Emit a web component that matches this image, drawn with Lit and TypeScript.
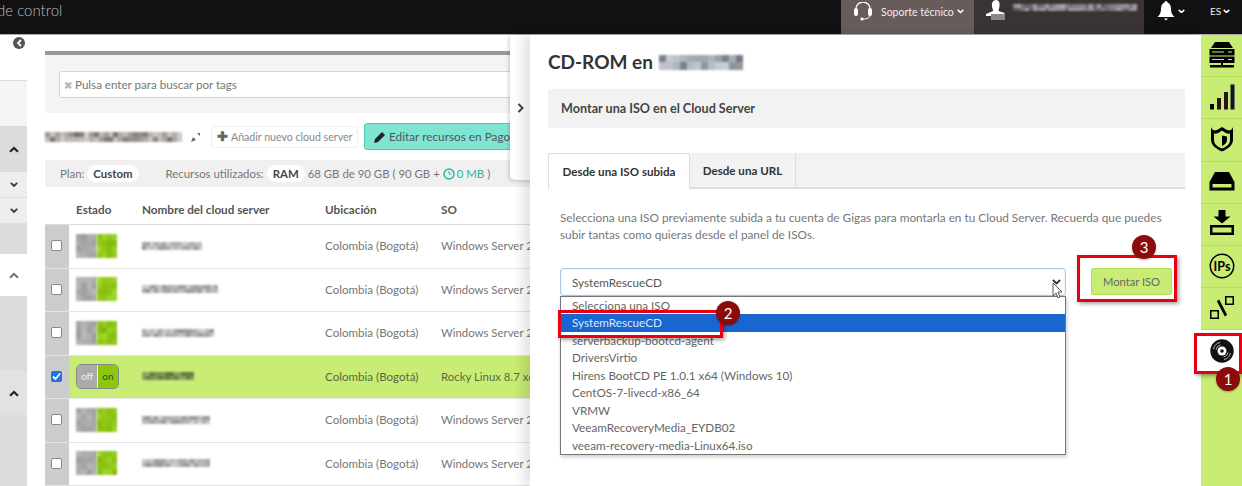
import { LitElement, html, css, svg, unsafeCSS } from "lit";
import { customElement } from "lit/decorators.js";

const F = 'Lato, "Open Sans", sans-serif';

function rnd(seed: number) {
  let s = seed;
  return () => ((s = (s * 9301 + 49297) % 233280) / 233280);
}
function mosaic(seed: number, w: number, h: number, base: number[], spread = 60, cell = 5) {
  const r = rnd(seed);
  const cols = Math.ceil(w / cell);
  const rws = Math.max(1, Math.round(h / cell));
  const cells = [];
  for (let i = 0; i < cols * rws; i++) {
    const d = (r() - 0.35) * spread;
    const c = `rgb(${(base[0] + d) | 0},${(base[1] + d) | 0},${(base[2] + d) | 0})`;
    cells.push(html`<i style="background:${c}"></i>`);
  }
  return html`<span class="mosaic" style="width:${w}px;height:${h}px;grid-template-columns:repeat(${cols},1fr);grid-template-rows:repeat(${rws},1fr)">${cells}</span>`;
}

const chev = (c = "#333", s = 8) => html`<svg width=${s} height=${s * 0.7} viewBox="0 0 10 7"><path d="M1 1.2 5 5 9 1.2" fill="none" stroke=${c} stroke-width="2.2"/></svg>`;
const chevUp = (c = "#333") => html`<svg width="10" height="7" viewBox="0 0 10 7"><path d="M1 5.8 5 2 9 5.8" fill="none" stroke=${c} stroke-width="2.2"/></svg>`;

const G = "#c9ec74";
const icons = [
  svg`<path d="M6 0h14l4 6H2z"/><rect x="0.500" y="7" width="25" height="6.500"/><rect x="0.500" y="14.500" width="25" height="6.500"/><path d="M12 21h2v2h11v2.500H1V23h11z"/><g fill=${G}><rect x="3" y="9.500" width="12" height="1"/><rect x="3" y="17" width="12" height="1"/><rect x="19" y="9.500" width="4" height="1"/><rect x="19" y="17" width="4" height="1"/></g>`,
  svg`<rect x="1" y="20" width="4" height="5.500"/><rect x="8" y="14" width="4" height="11.500" fill="#2a1216"/><rect x="15" y="8" width="4" height="17.500" fill="#2a1216"/><rect x="21.500" y="0.500" width="4" height="25" fill="#12122a"/>`,
  svg`<path d="M2 1c1 3 3 4 6 3l5-3 5 3c3 1 5 0 6-3v13c0 5-5 9-11 11.500C7 23 2 19 2 14z"/><path d="M5 7.500c2 .5 4 0 8-3 4 3 6 3.500 8 3V14c0 4-3 6.500-8 8.500-5-2-8-4.500-8-8.500z" fill=${G}/><path d="M13 9.500l5 1V14c0 2.500-2 4.500-5 6z"/>`,
  svg`<path d="M6 4h14l5.500 10v8.500H.5V14z"/><rect x="3.500" y="16" width="19" height="3.500" fill=${G}/>`,
  svg`<path d="M9.500 0h7v6.500h5l-8.500 7-8.500-7h5z"/><path d="M1 15h24v10H1z"/><rect x="3.500" y="17.500" width="19" height="5" fill=${G}/>`,
  svg`<circle cx="13" cy="13" r="11.700" fill="none" stroke="#000" stroke-width="1.500"/><text x="13" y="17.500" font-size="12.500" font-weight="700" text-anchor="middle" font-family="Lato, sans-serif">IPs</text>`,
  svg`<path d="M1 15h9v9H1zM2.500 16.500v6h6v-6zM16 1h9v9h-9zM17.500 2.500v6h6v-6z" fill-rule="evenodd"/><path d="M7 7l2-2 10 14-2 2z" transform="rotate(8 13 13)"/>`,
];

const rows = [
  { seed: 3, w: 60, so: "Windows Server 2" },
  { seed: 17, w: 76, so: "Windows Server 2" },
  { seed: 29, w: 72, so: "Windows Server 2" },
  { seed: 41, w: 52, so: "Rocky Linux 8.7 x64", active: true },
  { seed: 53, w: 68, so: "Windows Server 2" },
  { seed: 67, w: 68, so: "Windows Server 2" },
];

const isoList = [
  "Selecciona una ISO",
  "SystemRescueCD",
  "serverbackup-bootcd-agent",
  "DriversVirtio",
  "Hirens BootCD PE 1.0.1 x64 (Windows 10)",
  "CentOS-7-livecd-x86_64",
  "VRMW",
  "VeeamRecoveryMedia_EYDB02",
  "veeam-recovery-media-Linux64.iso",
];

const sideSegs = [
  ["s-white", 46, ""], ["s-pale", 46, ""], ["s-gray", 45, "up"], ["s-pale2", 26, "down"], ["s-pale2", 26, "down"],
  ["s-gray", 30, ""], ["s-white", 43, "upg"], ["s-gray", 30, ""], ["s-gray", 44, ""], ["s-gray2", 45, "up2"], ["s-gray", 30, ""], ["s-gray", 40, ""],
] as const;

@customElement("app-root")
export class AppRoot extends LitElement {
  static styles = css`
    :host { display: block; width: 1242px; height: 486px; overflow: hidden; position: relative; font-family: ${unsafeCSS(F)}; color: #666; font-size: 12px; background: #fff; }
    .mosaic { display: inline-grid; overflow: hidden; filter: blur(.8px); vertical-align: middle; flex: none; }
    header { height: 34px; background: #111; border-bottom: 1px solid #aaa; display: flex; align-items: stretch; color: #ddd; box-sizing: content-box; }
    .brand { font-size: 15px; color: #bbb; margin-left: -3px; line-height: 20px; width: 844px; flex: none; font-weight: 300; }
    .support { width: 133px; flex: none; background: #665c59; display: flex; align-items: center; gap: 3px; padding: 0 0 11px 12px; box-sizing: border-box; color: #eee; font-size: 10.5px; height: 34px; white-space: nowrap; }
    .support svg:first-child { margin-right: 5px; }
    .user { width: 170px; flex: none; background: #3a3333; display: flex; align-items: flex-start; gap: 6px; padding: 0 0 0 11px; box-sizing: border-box; }
    .user .mosaic { margin-top: 4px; }
    .bell { width: 55px; flex: none; display: flex; gap: 3px; padding: 0 0 12px 13px; box-sizing: border-box; align-items: center; }
    .lang { display: flex; align-items: center; gap: 2px; padding: 0 0 12px 11px; font-size: 10px; color: #eee; }
    .body { display: flex; height: 451px; }
    .left { width: 27px; flex: none; display: flex; flex-direction: column; position: relative; }
    .seg { display: flex; align-items: center; justify-content: center; flex: none; border-bottom: 1px solid #ddd; box-sizing: border-box; }
    .s-white { background: #fff; } .s-pale { background: #f5f5f5; } .s-gray { background: #dcdcdc; } .s-pale2 { background: #eee; } .s-gray2 { background: #e2e2e2; }
    .collapse { position: absolute; left: 13px; top: 2px; width: 12px; height: 12px; border-radius: 50%; background: #555; display: flex; align-items: center; justify-content: center; }
    main { flex: 1; min-width: 0; padding: 16px 0 0 18px; overflow: hidden; }
    .topbar { height: 4px; background: #999; }
    .search { background: #f4f4f4; height: 58px; padding: 16px 0 0 14px; box-sizing: border-box; }
    .input { height: 27px; background: #fff; border: 1px solid #d4d4d4; border-radius: 3px; display: flex; align-items: center; gap: 3px; padding-left: 4px; color: #777; font-size: 11.6px; box-sizing: border-box; }
    .input b { color: #bbb; font-size: 10px; }
    .title { display: flex; align-items: center; height: 47px; }
    .title .pen { margin: 0 10px 0 9px; }
    .add { height: 22px; width: 147px; background: #fff; border: 1px solid #f0f0f0; box-sizing: border-box; border-radius: 2px; display: flex; align-items: center; padding-left: 5px; gap: 3px; color: #888; font-size: 10.6px; white-space: nowrap; flex: none; }
    .add b { color: #666; font-size: 13px; line-height: 1; }
    .edit { height: 27px; margin-left: 6px; width: 200px; flex: none; background: #7fe5d3; border: 1px solid #4fc9b3; box-sizing: border-box; border-radius: 3px; display: flex; align-items: center; padding-left: 9px; gap: 3px; color: #555; font-size: 11.8px; white-space: nowrap; }
    .stats { height: 27px; background: #f0f0f0; display: flex; align-items: center; padding-left: 15px; color: #777; font-size: 11.4px; white-space: nowrap; }
    .chip { background: #fff; border-radius: 10px; padding: 2px 6px; color: #444; font-weight: 700; margin: 0 3px 0 3px; font-size: 11.4px; }
    .stats .gap { width: 24px; }
    .teal { color: #2bb59c; display: inline-flex; align-items: center; gap: 2px; margin: 0 3px; }
    .thead, .row { display: grid; grid-template-columns: 24px 73px 183px 116px 1fr; }
    .thead { height: 38px; align-items: center; font-weight: 700; color: #555; border-bottom: 1px solid #ddd; box-sizing: border-box; font-size: 11.7px; padding-top: 7px; }
    .thead span:nth-child(2) { padding-left: 7px; }
    .row { height: 43.5px; align-items: stretch; border-bottom: 1px solid #e4e4e4; box-sizing: border-box; color: #777; font-size: 11.6px; }
    .row > div { display: flex; align-items: center; white-space: nowrap; padding-bottom: 1px; box-sizing: border-box; }
    .row > div:last-child { font-size: 11.4px; }
    .row .chk { background: #ccc; justify-content: center; padding-right: 2px; box-sizing: border-box; }
    .box { width: 11px; height: 11px; background: #fff; border: 1px solid #888; border-radius: 2px; box-sizing: border-box; }
    .box.on { border: none; background: #1a73e8; display: flex; align-items: center; justify-content: center; }
    .row.active > div:not(.chk) { background: #c9ec74; color: #5a6a40; }
    .row > div.tog { padding-left: 7px; }
    .toggle { display: flex; width: 41px; height: 24px; }
    .switch { display: flex; width: 43px; height: 25px; border: 1px solid #888; border-radius: 5px; box-sizing: border-box; overflow: hidden; font-size: 10px; text-align: center; line-height: 23px; }
    .switch i { flex: 1; font-style: normal; background: #aaa; color: #eee; }
    .switch i + i { background: #8cc70c; color: #444; border-left: 1px solid #eee; }
    .rail { width: 41px; flex: none; background: #c9ec74; display: flex; flex-direction: column; }
    .rail div { height: 42.2px; flex: none; display: flex; align-items: center; justify-content: center; border-bottom: 1px solid #b7dd5b; box-sizing: border-box; padding-bottom: 2px; }
    .rail div.cur { background: #fff; padding-bottom: 0; }
    .flap { position: absolute; left: 510px; top: 35px; width: 24px; height: 145px; background: #fff; border-radius: 0 0 0 5px; box-shadow: -1px 1px 4px rgba(0,0,0,.2); display: flex; align-items: center; padding-left: 7px; box-sizing: border-box; }
    .panel { position: absolute; left: 530px; top: 35px; width: 671px; height: 451px; background: #fff; box-shadow: -8px 0 10px rgba(0,0,0,.1); padding: 0 16px 0 18px; box-sizing: border-box; }
    h1 { margin: 0; height: 54px; font-size: 19px; line-height: 54px; color: #333; font-weight: 700; display: flex; align-items: center; gap: 6px; }
    .bar { height: 39px; background: #f2f2f2; padding-left: 13px; line-height: 39px; font-weight: 700; color: #444; font-size: 12.6px; }
    .tabs { margin-top: 25px; height: 36px; background: #f2f2f2; border-bottom: 2px solid #ddd; display: flex; box-sizing: border-box; }
    .tab { width: 106px; height: 34px; line-height: 36px; text-align: center; font-weight: 700; color: #333; font-size: 11.6px; border-right: 1px solid #ddd; box-sizing: border-box; }
    .tab.on { width: 142px; height: 36px; background: #fff; border: 1px solid #ddd; border-bottom: none; border-radius: 3px 3px 0 0; }
    p { margin: 0; padding: 20px 12px 0 12px; line-height: 17px; color: #777; font-size: 11.8px; height: 59px; box-sizing: content-box; white-space: nowrap; }
    .form { display: flex; margin-left: 12px; align-items: flex-start; position: relative; }
    .sel { width: 506px; height: 28px; border: 1px solid #a9cbe8; border-radius: 3px; box-sizing: border-box; padding-left: 11px; line-height: 26px; color: #555; font-size: 11.7px; display: flex; justify-content: space-between; align-items: center; padding-right: 4px; box-shadow: inset 0 0 2px #cfe3f5; }
    .btn { margin-left: 25px; width: 81px; height: 27px; background: #c9ec74; border: 1px solid #b2dc57; border-radius: 2px; box-sizing: border-box; text-align: center; line-height: 25px; color: #666; font-size: 11.2px; }
    .drop { position: absolute; left: 0; top: 28px; width: 506px; height: 159px; background: #fff; border: 1px solid #777; box-sizing: border-box; box-shadow: 1px 2px 4px rgba(0,0,0,.2); overflow: hidden; }
    .drop div { height: 17.5px; line-height: 17.5px; padding-left: 11px; color: #666; font-size: 11.7px; }
    .drop div:first-child { height: 17px; line-height: 17px; }
    .drop div.sel2 { background: #1a66d0; color: #dfe8f5; }
    .redbox { position: absolute; border: 3px solid #e8000e; box-sizing: border-box; box-shadow: 2px 2px 4px rgba(0,0,0,.35); pointer-events: none; }
    .badge { position: absolute; width: 24px; height: 24px; border-radius: 50%; background: #8b0a0a; color: #fff; font-size: 15px; text-align: center; line-height: 24px; box-shadow: 0 1px 2px rgba(0,0,0,.3); }
    .cursor { position: absolute; left: 1052px; top: 282px; }
  `;

  render() {
    return html`
      <header>
        <div class="brand">de control</div>
        <div class="support">
          <svg width="20" height="20" viewBox="0 0 20 20"><path d="M3 9V7a7 7 0 0 1 14 0v2" fill="none" stroke="#fff" stroke-width="1.300"/><rect x="1" y="6" width="4" height="8" rx="2" fill="#fff"/><rect x="15" y="6" width="4" height="8" rx="2" fill="#fff"/><path d="M17 13c0 3-3 4-7 4" fill="none" stroke="#fff"/><circle cx="9" cy="17" r="1.600" fill="#fff"/></svg>
          <span>Soporte técnico</span>${chev("#fff", 7)}
        </div>
        <div class="user">
          <svg width="22" height="20" viewBox="0 0 22 20"><path d="M11 0c3 0 4 3 3.500 6 0 2-1 3-1 5l6 2v3H1v-2l7-3c0-2-1-3-1-5C6.500 3 8 0 11 0z" fill="#fff"/><rect x="6" y="14" width="14" height="6" fill="#888"/></svg>
          ${mosaic(11, 124, 7, [120, 115, 125], 90, 4)}
        </div>
        <div class="bell">
          <svg width="18" height="20" viewBox="0 0 18 20"><path d="M9 0c1 0 1.500 1 1.500 1.500C13 2.500 14 5 14 8c0 3 1 6 3.500 8H.5C3 14 4 11 4 8c0-3 1-5.500 3.500-6.500C7.500 1 8 0 9 0z" fill="#fff"/><path d="M7 17.500h4L9 19.500z" fill="#fff"/></svg>
          ${chev("#fff", 7)}
        </div>
        <div class="lang">ES ${chev("#fff", 7)}</div>
      </header>
      <div class="body">
        <div class="left">
          ${sideSegs.map(([c, h, a]) => html`<div class="seg ${c}" style="height:${h}px">
            ${a === "up" || a === "up2" ? chevUp("#222") : a === "upg" ? chevUp("#777") : a === "down" ? chev("#333") : ""}
          </div>`)}
          <div class="collapse"><svg width="6" height="8" viewBox="0 0 6 8"><path d="M5 1 2 4l3 3" fill="none" stroke="#fff" stroke-width="1.800"/></svg></div>
        </div>
        <main>
          <div class="topbar"></div>
          <div class="search"><div class="input"><b>✖</b><span>Pulsa enter para buscar por tags</span></div></div>
          <div class="title">
            ${mosaic(5, 137, 10, [150, 145, 140], 100, 5)}
            <svg class="pen" width="10" height="10" viewBox="0 0 10 10"><path d="M0 10 2 5l3 3zM6 1h3v3z" fill="#666"/></svg>
            <div class="add"><b>✚</b><span>Añadir nuevo cloud server</span></div>
            <div class="edit">
              <svg width="12" height="12" viewBox="0 0 12 12"><path d="M0 12l1-4 7-7 3 3-7 7z" fill="#222"/></svg>
              <span>Editar recursos en Pago</span>
            </div>
          </div>
          <div class="stats">
            <span>Plan:</span><span class="chip">Custom</span><span class="gap"></span>
            <span>Recursos utilizados:</span><span class="chip">RAM</span>
            <span>68 GB de 90 GB ( 90 GB +</span>
            <span class="teal"><svg width="12" height="12" viewBox="0 0 12 12"><circle cx="6" cy="6" r="5" fill="none" stroke="#2bb59c" stroke-width="1.500"/><path d="M6 3v3h2.500" fill="none" stroke="#2bb59c"/></svg> 0 MB</span><span>)</span>
          </div>
          <div class="thead"><span></span><span>Estado</span><span>Nombre del cloud server</span><span>Ubicación</span><span>SO</span></div>
          ${rows.map((r) => html`
            <div class="row ${r.active ? "active" : ""}">
              <div class="chk">${r.active
                ? html`<span class="box on"><svg width="9" height="9" viewBox="0 0 9 9"><path d="M1 4.500 3.500 7 8 1.500" fill="none" stroke="#fff" stroke-width="1.800"/></svg></span>`
                : html`<span class="box"></span>`}</div>
              <div class="tog">${r.active
                ? html`<span class="switch"><i>off</i><i>on</i></span>`
                : html`<span class="toggle">${mosaic(r.seed + 1, 21, 24, [165, 165, 165], 30, 6)}${mosaic(r.seed + 2, 20, 24, [140, 195, 20], 30, 6)}</span>`}</div>
              <div>${mosaic(r.seed, r.w, 8, r.active ? [110, 130, 70] : [170, 170, 170], 60, 4)}</div>
              <div>Colombia (Bogotá)</div>
              <div>${r.so}</div>
            </div>`)}
        </main>
        <nav class="rail">
          ${icons.map((i) => html`<div><svg width="26" height="26" viewBox="0 0 26 26">${i}</svg></div>`)}
          <div class="cur"><svg width="24" height="24" viewBox="0 0 24 24"><circle cx="12" cy="12" r="11.700" fill="#111"/><path d="M3.500 10A8.500 8.500 0 0 1 10 3.500M6 10.500A6 6 0 0 1 10.500 6M20.500 14A8.500 8.500 0 0 1 14 20.500M18 13.500A6 6 0 0 1 13.500 18" fill="none" stroke="#bbb" stroke-width="1"/><circle cx="12" cy="12" r="4.500" fill="#fff"/><circle cx="12" cy="12" r="1.800" fill="#111"/></svg></div>
        </nav>
      </div>

      <div class="flap"><svg width="7" height="10" viewBox="0 0 7 10"><path d="M1.500 1 5.500 5l-4 4" fill="none" stroke="#444" stroke-width="2"/></svg></div>
      <section class="panel">
        <h1><span>CD-ROM en</span>${mosaic(23, 84, 15, [145, 150, 160], 90, 7)}</h1>
        <div class="bar">Montar una ISO en el Cloud Server</div>
        <div class="tabs"><div class="tab on">Desde una ISO subida</div><div class="tab">Desde una URL</div></div>
        <p>Selecciona una ISO previamente subida a tu cuenta de Gigas para montarla en tu Cloud Server. Recuerda que puedes<br>subir tantas como quieras desde el panel de ISOs.</p>
        <div class="form">
          <div class="sel"><span>SystemRescueCD</span>${chev("#333", 9)}</div>
          <div class="btn">Montar ISO</div>
          <div class="drop">${isoList.map((t, i) => html`<div class=${i === 1 ? "sel2" : ""}>${t}</div>`)}</div>
        </div>
      </section>

      <div class="redbox" style="left:558px;top:310px;width:165px;height:28px"></div>
      <div class="badge" style="left:716px;top:301px">2</div>
      <div class="redbox" style="left:1077px;top:255px;width:100px;height:47px"></div>
      <div class="badge" style="left:1132px;top:235px">3</div>
      <div class="redbox" style="left:1194px;top:333px;width:48px;height:41px"></div>
      <div class="badge" style="left:1216px;top:367px">1</div>
      <svg class="cursor" width="13" height="18" viewBox="0 0 13 18"><path d="M1 1v13l3-3 2 5 2-1-2-5h4z" fill="#fff" stroke="#555"/></svg>
    `;
  }
}
